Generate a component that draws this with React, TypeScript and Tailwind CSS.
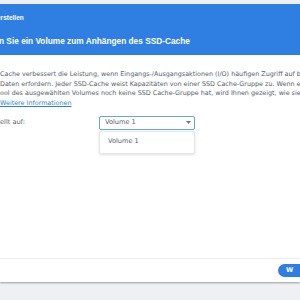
import React from "react";

export default function App() {
  const font = { fontFamily: '"DejaVu Sans", Verdana, sans-serif' };
  const bold = { fontFamily: '"Liberation Sans", Arial, sans-serif' };
  return (
    <div className="w-[300px] h-[300px] overflow-hidden bg-[#eef0f3] flex flex-col" style={font}>
      <div className="h-[4px] shrink-0" />
      <div className="h-[51px] shrink-0 bg-[#2f7fe3] text-white flex flex-col overflow-hidden" style={bold}>
        <div className="mt-[9px] ml-[-3px] text-[6.5px] font-bold leading-[10px] whitespace-nowrap">erstellen</div>
        <div className="mt-[12px] ml-[-1px] text-[8.3px] font-bold leading-[12px] whitespace-nowrap">n Sie ein Volume zum Anhängen des SSD-Cache</div>
      </div>
      <div className="h-[227px] shrink-0 bg-white flex flex-col overflow-hidden shadow-[0_1px_2px_rgba(0,0,0,0.35)]">
        <div className="mt-[15px] flex flex-col text-[6.4px] leading-[9.7px] text-[#56606b] whitespace-nowrap">
          <div>Cache verbessert die Leistung, wenn Eingangs-/Ausgangsaktionen (I/O) häufigen Zugriff auf bestimmte</div>
          <div>Daten erfordern. Jeder SSD-Cache weist Kapazitäten von einer SSD Cache-Gruppe zu. Wenn ein</div>
          <div>ool des ausgewählten Volumes noch keine SSD Cache-Gruppe hat, wird Ihnen gezeigt, wie sie</div>
          <div className="text-[#2f7fe3] underline">Weitere Informationen</div>
        </div>
        <div className="mt-[7px] flex items-start text-[6.6px] text-[#56606b]">
          <div className="w-[99px] h-[14px] flex items-center whitespace-nowrap">ellt auf:</div>
          <div className="w-[96px] flex flex-col">
            <div className="h-[14px] border border-[#6aa2e6] rounded-[2px] flex items-center justify-between pl-[5px] pr-[3px]">
              <span>Volume 1</span>
              <svg width="5" height="3" viewBox="0 0 5 3"><path d="M0 0h5L2.5 3z" fill="#6b7785" /></svg>
            </div>
            <div className="mt-[1px] h-[23px] border border-[#e3e6ea] rounded-[2px] bg-white shadow-[0_1px_3px_rgba(0,0,0,0.12)] flex items-center px-[8px]">
              Volume 1
            </div>
          </div>
        </div>
        <div className="flex-1" />
        <div className="h-[24px] border-t border-[#eceef1] flex items-center justify-end">
          <div className="w-[24px] h-[13px] mr-[-2px] rounded-l-full bg-[#2f7fe3] text-white text-[6.5px] font-bold flex items-center pl-[8px] overflow-hidden">W</div>
        </div>
      </div>
    </div>
  );
}
